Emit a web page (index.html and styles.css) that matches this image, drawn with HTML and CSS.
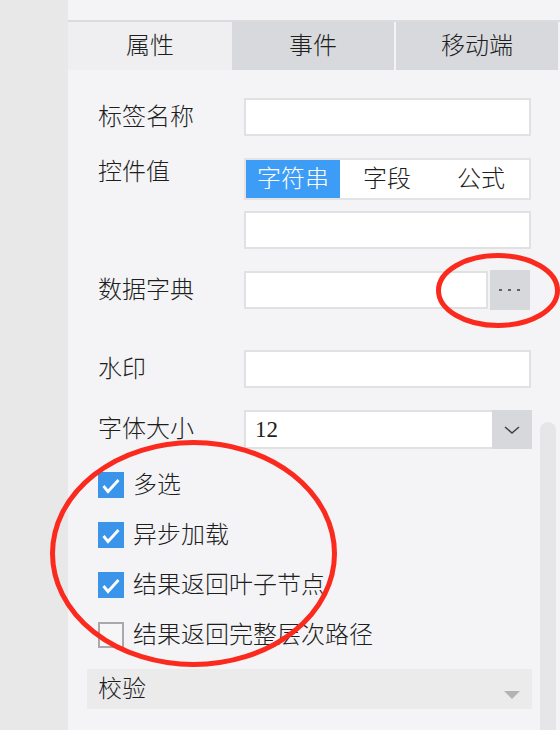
FILE: index.html
```html
<!DOCTYPE html>
<html lang="zh-CN">
<head>
  <meta charset="UTF-8" />
  <meta name="viewport" content="width=device-width, initial-scale=1.0"/>
  <title>控件属性</title>
  <link rel="stylesheet" href="styles.css">
</head>
<body>
  <div class="app">
    <div class="side"></div>
    <div class="panel">
      <div class="tabs">
        <div class="tab active">属性</div>
        <div class="tab">事件</div>
        <div class="tab">移动端</div>
      </div>

      <div class="form">
        <div class="row">
          <label class="label">标签名称</label>
          <input class="field" type="text" />
        </div>

        <div class="row row-top">
          <label class="label">控件值</label>
          <div class="control">
            <div class="seg">
              <span class="seg-item on">字符串</span>
              <span class="seg-item">字段</span>
              <span class="seg-item">公式</span>
            </div>
            <input class="field field-sub" type="text" />
          </div>
        </div>

        <div class="row row-dict">
          <label class="label">数据字典</label>
          <div class="picker">
            <input class="field field-pick" type="text" />
            <button class="more" type="button">
              <svg width="24" height="4" viewBox="0 0 24 4"><rect x="1" y="1" width="3" height="2" fill="#5f5f5f"/><rect x="10" y="1" width="3" height="2" fill="#5f5f5f"/><rect x="19" y="1" width="3" height="2" fill="#5f5f5f"/></svg>
            </button>
          </div>
        </div>

        <div class="row">
          <label class="label">水印</label>
          <input class="field" type="text" />
        </div>

        <div class="row row-size">
          <label class="label">字体大小</label>
          <div class="select">
            <span class="select-value">12</span>
            <span class="select-arrow">
              <svg width="16" height="10" viewBox="0 0 16 10"><polyline points="1,2 8,8 15,2" fill="none" stroke="#444" stroke-width="1.6"/></svg>
            </span>
          </div>
        </div>

        <div class="check">
          <span class="box checked"><svg width="26" height="26" viewBox="0 0 26 26"><polyline points="5.5,14 10,19.5 20.5,8" fill="none" stroke="#fff" stroke-width="2.8"/></svg></span>
          <span>多选</span>
        </div>
        <div class="check">
          <span class="box checked"><svg width="26" height="26" viewBox="0 0 26 26"><polyline points="5.5,14 10,19.5 20.5,8" fill="none" stroke="#fff" stroke-width="2.8"/></svg></span>
          <span>异步加载</span>
        </div>
        <div class="check">
          <span class="box checked"><svg width="26" height="26" viewBox="0 0 26 26"><polyline points="5.5,14 10,19.5 20.5,8" fill="none" stroke="#fff" stroke-width="2.8"/></svg></span>
          <span>结果返回叶子节点</span>
        </div>
        <div class="check check-last">
          <span class="box"></span>
          <span>结果返回完整层次路径</span>
        </div>

        <div class="section">
          <span>校验</span>
          <span class="caret"></span>
        </div>
      </div>

      <div class="scrollbar"></div>
    </div>

    <!-- hand-drawn review marks -->
    <svg class="marks" width="560" height="730" viewBox="0 0 560 730">
      <ellipse cx="498" cy="290.5" rx="59.5" ry="35" fill="none" stroke="#fb2a1e" stroke-width="5"/>
      <ellipse cx="193.5" cy="553.5" rx="141" ry="111" fill="none" stroke="#fb2a1e" stroke-width="5"/>
    </svg>
  </div>
</body>
</html>
```

FILE: styles.css
```css
* {
  box-sizing: border-box;
}
body {
  margin: 0;
  font-family: "Liberation Serif", "Noto Sans CJK SC", sans-serif;
  font-size: 24px;
  font-weight: 300;
  color: #1e1e1e;
  background: #f4f4f6;
}
.app {
  position: relative;
  display: flex;
  width: 560px;
  height: 730px;
  overflow: hidden;
}
.side {
  width: 68px;
  background: #e8e8e9;
}
.panel {
  position: relative;
  flex: 1;
  padding-top: 20px;
  background: #f4f4f6;
}
.tabs {
  display: flex;
  gap: 2px;
  height: 50px;
  padding-right: 2px;
  border-top: 2px solid #dcdcdf;
}
.tab {
  display: flex;
  align-items: center;
  justify-content: center;
  width: 162px;
  background: #d8d9dc;
  line-height: 1;
}
.tab.active {
  background: #efeff1;
}
.tabs .tab:first-child {
  width: 164px;
  margin-right: -2px;
}
.form {
  padding: 28px 0 0 30px;
}
.row {
  display: flex;
  align-items: center;
  margin-bottom: 22px;
}
.row-top {
  align-items: flex-start;
  margin-bottom: 21px;
}
.row-dict {
  margin-bottom: 40px;
}
.row-size {
  margin-bottom: 23px;
}
.label {
  width: 146px;
  line-height: 1.2;
}
.field {
  width: 287px;
  height: 38px;
  margin: 0;
  border: 2px solid #e1e1e4;
  background: #fff;
  font: inherit;
  outline: none;
}
.control {
  width: 287px;
}
.seg {
  display: flex;
  height: 42px;
  border: 2px solid #e3e3e6;
  background: #fff;
}
.seg-item {
  display: flex;
  align-items: center;
  justify-content: center;
  width: 94px;
  line-height: 1;
}
.seg-item.on {
  background: #3d9cf5;
  color: #fff;
}
.field-sub {
  display: block;
  margin-top: 11px;
}
.picker {
  display: flex;
  align-items: center;
  gap: 2px;
  width: 287px;
  height: 40px;
}
.field-pick {
  width: 244px;
}
.more {
  display: flex;
  align-items: center;
  justify-content: center;
  width: 40px;
  height: 40px;
  padding: 0;
  border: 0;
  background: #d7d8dc;
}
.select {
  display: flex;
  width: 288px;
  height: 39px;
  background: #fff;
}
.select-value {
  flex: 1;
  display: flex;
  align-items: center;
  padding-left: 9px;
  font-size: 23px;
  font-weight: 400;
  border: 2px solid #e1e1e4;
  border-right: 0;
}
.select-arrow {
  display: flex;
  align-items: center;
  justify-content: center;
  width: 40px;
  background: #d7d8dc;
}
.check {
  display: flex;
  align-items: center;
  gap: 9px;
  height: 26px;
  margin-bottom: 24px;
  line-height: 1;
}
.check-last {
  margin-bottom: 21px;
}
.box {
  width: 26px;
  height: 26px;
  border: 2px solid #a9a9ab;
  background: #f6f6f7;
}
.box.checked {
  border: 0;
  background: #3a95ea;
}
.box svg {
  display: block;
}
.section {
  display: flex;
  align-items: center;
  justify-content: space-between;
  width: 445px;
  height: 40px;
  margin-left: -11px;
  padding: 0 12px 0 11px;
  background: #ebebec;
  line-height: 1;
}
.caret {
  width: 0;
  height: 0;
  margin-top: 12px;
  border-left: 8px solid transparent;
  border-right: 8px solid transparent;
  border-top: 8px solid #b3b3b5;
}
.scrollbar {
  position: absolute;
  left: 472px;
  top: 422px;
  width: 16px;
  height: 320px;
  border-radius: 8px;
  background: #e6e6e8;
}
.marks {
  position: absolute;
  left: 0;
  top: 0;
  pointer-events: none;
}
```
